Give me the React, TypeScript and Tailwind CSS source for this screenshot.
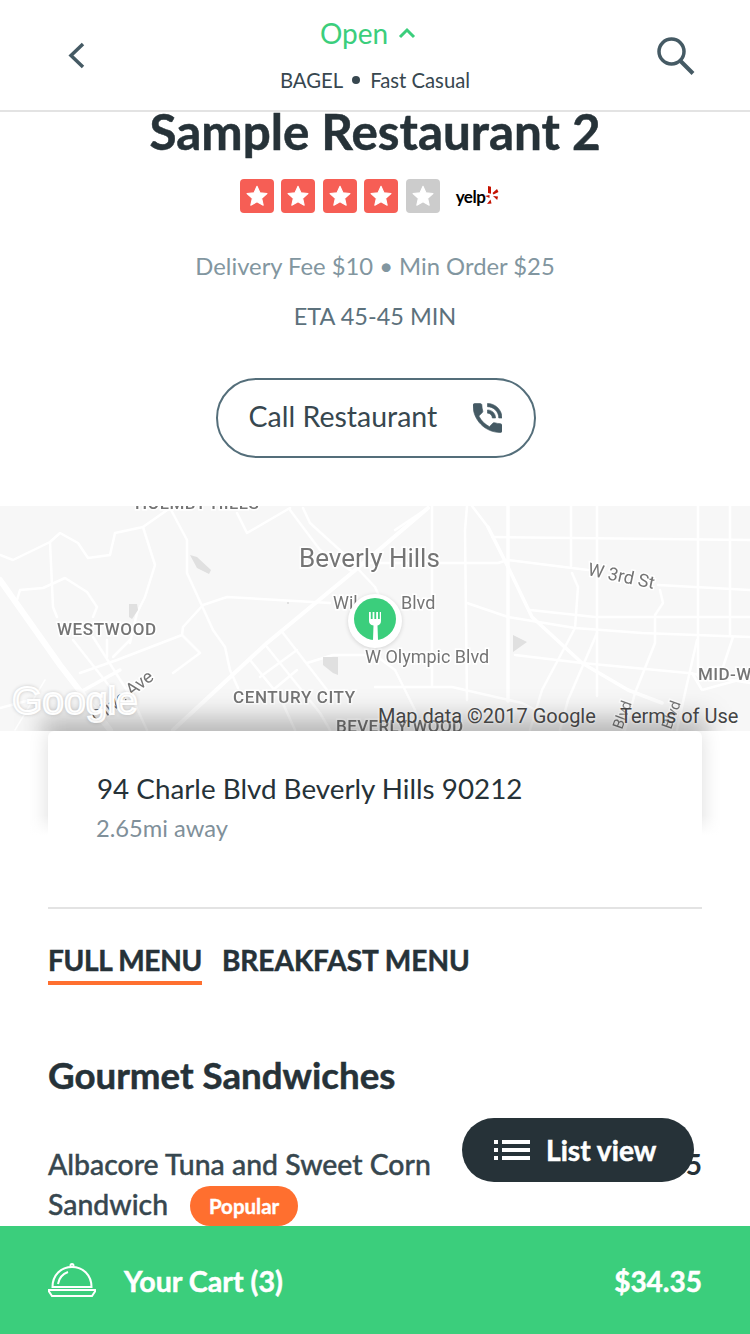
const lato = "font-['Lato','Inter',sans-serif]";

function Star({ fill }: { fill: string }) {
  return (
    <div className="w-[34px] h-[34px] rounded-[4px] flex items-center justify-center" style={{ backgroundColor: fill }}>
      <svg width="26" height="26" viewBox="0 0 24 24" fill="#fff" stroke="#fff" strokeWidth="1" strokeLinejoin="round"><path d="M12 3l2.700 6 6.500.7-4.900 4.400 1.400 6.400L12 17.300l-5.700 3.200 1.400-6.400-4.900-4.400 6.500-.7z" /></svg>
    </div>
  );
}

function MapArt() {
  const road = { fill: "none", stroke: "#fff", strokeLinejoin: "round" as const, strokeLinecap: "round" as const };
  const label = { fontFamily: "Roboto, sans-serif", fill: "#757575", stroke: "#fff", strokeWidth: 3, paintOrder: "stroke" as const };
  return (
    <svg className="absolute inset-0 w-full h-full blur-[0.5px]" viewBox="0 506 750 225">
      <rect x="0" y="500" width="750" height="235" fill="#f7f7f7" />
      <g {...road} strokeWidth="2.5">
        <path d="M0 555l13 5 37-18 10-9 18 10 10 15 22-3 5-22 28-6 27-19" />
        <path d="M143 527l12 38-10 32-8 16-7 30" />
        <path d="M50 542l3 65 4 10" />
        <path d="M17 600l3-10 23-2 22-10 22 14 10 15-4 10" />
        <path d="M170 508l17 32v33l26 57 12 17 5 23 8 18" />
        <path d="M330 603l-103-6-24 8-20 22-1 8-65 25-37 13" />
        <path d="M182 635l18 18-27 20" />
        <path d="M73 640l37 47" />
        <path d="M93 637l40 63 14 30" />
        <path d="M107 640v17" />
        <path d="M113 657l17-17" />
        <path d="M250 660l30 37 15 33" />
        <path d="M267 647l53 66 10 17" />
        <path d="M283 633l44 57" />
        <path d="M260 677l37-27" />
        <path d="M273 690l24-20" />
        <path d="M307 663l26-8h42l20 15 20 40 5 20" />
        <path d="M290 508l-43 25-10-20" />
        <path d="M290 510l30 40 33 22" />
        <path d="M303 508l7 15 33 30 32 34 18 40" />
        <path d="M428 508l-33 22" />
        <path d="M375 687h77l70 16 40 20" />
        <path d="M467 603l41 14 67 11 67 5 108 4" />
        <path d="M530 610l65 7h155" />
        <path d="M492 537l258 3" />
        <path d="M345 563h153l10-3 80 10" />
        <path d="M658 585l92 5" />
        <path d="M572 573l6 14-3 41-33 62-12 40" />
        <path d="M597 633l-29 67-8 30" />
        <path d="M660 590l3 13-8 12v28l-20 50-10 37" />
        <path d="M697 640l-12 53-8 37" />
        <path d="M733 637l-11 33" />
        <path d="M515 655l67 8 106 10 62 10" />
        <path d="M692 673l10 17 48-13" />
        <path d="M472 506l16 21" />
        <path d="M432 506v180" />
        <path d="M467 506l-2 24 2 170" />
        <path d="M571 506v60" />
        <path d="M597 506v190" />
        <path d="M698 506v170" />
        <path d="M730 506v130" />
      </g>
      <g {...road}>
        <path d="M508 506v195" strokeWidth="3.500" />
        <path d="M488 527l20 40 24 50 50 46 46 27 34 13" strokeWidth="3.500" />
        <path d="M0 580l60 85 50 65" strokeWidth="6" />
        <path d="M173 730l94-87 86-71 75-64" strokeWidth="4" />
        <path d="M75 695l45-25" strokeWidth="3.500" />
        <path d="M0 708l30-8" strokeWidth="2.500" />
        <path d="M15 730l30-50" strokeWidth="1.500" />
      </g>
      <g fill="#e0e0e0">
        <path d="M190 555l7 2 14 13-2 4-12-6z" />
        <path d="M129 604h8l1 6-6 9-3-2z" />
        <path d="M323 657h15v18l-5-2-10-8z" />
        <path d="M513 635l14 7-14 10z" />
        <path d="M287 602h2v2h-2z" />
      </g>
      <text x="135" y="509" fontSize="17" fontWeight="500" {...label} letterSpacing=".5">HOLMBY HILLS</text>
      <text x="299" y="567" fontSize="26" {...label}>Beverly Hills</text>
      <text x="57" y="635" fontSize="17" fontWeight="500" {...label} letterSpacing=".6">WESTWOOD</text>
      <text x="233" y="703" fontSize="17" fontWeight="500" {...label} letterSpacing=".6">CENTURY CITY</text>
      <text x="336" y="732" fontSize="17" fontWeight="500" {...label} letterSpacing=".4">BEVERLY WOOD</text>
      <text x="698" y="680" fontSize="17" fontWeight="500" {...label} letterSpacing=".4">MID-W</text>
      <text x="333" y="609" fontSize="18" {...label}>Wil</text>
      <text x="401" y="609" fontSize="18" {...label}>Blvd</text>
      <text x="365" y="663" fontSize="18" {...label}>W Olympic Blvd</text>
      <text x="587" y="575" fontSize="18" {...label} transform="rotate(12 587 575)">W 3rd St</text>
      <text x="97" y="724" fontSize="18" {...label} transform="rotate(-38 97 724)">Olive Ave</text>
      <text x="622" y="730" fontSize="15" {...label} transform="rotate(-70 622 730)">Blvd</text>
      <text x="671" y="730" fontSize="15" {...label} transform="rotate(-70 671 730)">Blvd</text>
    </svg>
  );
}

export default function App() {
  const heavy = "[-webkit-text-stroke-width:0.5px]";
  return (
    <div className={`relative w-[750px] h-[1334px] overflow-hidden bg-white flex flex-col ${lato}`}>
      <header className="relative z-20 h-[112px] shrink-0 bg-white border-b-2 border-[#e3e3e3] flex items-center justify-between pl-[64px] pr-[55px]">
        <svg width="24" height="30" viewBox="0 0 24 30" fill="none" stroke="#455a64" strokeWidth="3.5"><path d="M19 4L7 15.500l12 11.500" /></svg>
        <div className="ml-[5px] flex flex-col items-center">
          <div className="flex items-center gap-[10px] h-[34px] mr-[14px] mt-[-2px] text-[#3bce7c] text-[28px] leading-none">
            Open
            <svg width="18" height="12" viewBox="0 0 18 12" fill="none" stroke="#3bce7c" strokeWidth="3"><path d="M2 10l7-7 7 7" /></svg>
          </div>
          <div className="mt-[18px] flex items-center text-[20.300px] leading-[24px] text-[#37474f]">
            BAGEL<span className="ml-[9px] mr-[10px] w-[8px] h-[8px] rounded-full bg-[#37474f]" />Fast Casual
          </div>
        </div>
        <svg width="38" height="38" viewBox="0 0 38 38" fill="none" stroke="#455a64" strokeWidth="3.5" className="mt-[2px]"><circle cx="14.500" cy="14.500" r="12.500" /><path d="M23.500 24l12.500 12.500" strokeWidth="4" /></svg>
      </header>

      <main className="flex-1 min-h-0 overflow-hidden">
        <section className="h-[394px] flex flex-col items-center">
          <h1 className={`mt-[-10px] text-[49.400px] leading-[58px] font-bold text-[#263238] ${heavy}`}>Sample Restaurant 2</h1>
          <div className="mt-[19px] mr-[11px] flex items-center">
            <div className="flex gap-[7.500px]">
              <Star fill="#f65e55" /><Star fill="#f65e55" /><Star fill="#f65e55" /><Star fill="#f65e55" /><Star fill="#cccccc" />
            </div>
            <div className="ml-[16px] flex items-center">
              <span className="text-[17px] leading-none font-bold text-black tracking-[-0.5px]">yelp</span>
              <svg width="14" height="20" viewBox="0 0 14 20" fill="#c41200"><path d="M3 0l3 .8v7L3 7zM0 10l4.500-1v3zM2 18l3.500-4.500 1 4zM12 3l-4.500 4 1 1.500 5-2.500zM8 10l5 .5-.8 3.500z" /></svg>
            </div>
          </div>
          <p className="mt-[37px] text-[23.800px] leading-[32px] text-[#8296a0]">Delivery Fee $10 • Min Order $25</p>
          <p className="mt-[18px] text-[23.500px] leading-[32px] text-[#5c717c]">ETA 45-45 MIN</p>
          <button className="mt-[46px] ml-[1px] w-[320px] h-[80px] rounded-full border-2 border-[#546e7a] flex items-center justify-between pl-[31px] pr-[32px] pb-[4px] text-[28.500px] text-[#37474f]">
            Call Restaurant
            <svg width="29" height="30" viewBox="3 3 18 18" fill="#455a64" stroke="#455a64" strokeWidth="0.4" className="mt-[3px]">
              <path d="M20 15.500c-1.250 0-2.450-.2-3.570-.57-.35-.11-.74-.03-1.020.24l-2.200 2.200c-2.830-1.440-5.150-3.750-6.590-6.590l2.200-2.210c.28-.26.36-.65.25-1C8.700 6.450 8.500 5.250 8.500 4c0-.55-.45-1-1-1H4c-.55 0-1 .45-1 1 0 9.390 7.610 17 17 17 .55 0 1-.45 1-1v-3.500c0-.55-.45-1-1-1zM19 12h2c0-4.970-4.030-9-9-9v2c3.870 0 7 3.130 7 7zm-4 0h2c0-2.760-2.240-5-5-5v2c1.660 0 3 1.340 3 3z" />
            </svg>
          </button>
        </section>

        <section className="relative h-[225px] overflow-hidden">
          <MapArt />
          <div className="absolute left-[40px] right-[40px] bottom-[-16px] h-[32px] bg-black/20 blur-[12px]" />
          <div className="absolute left-[12px] top-[175px] text-[39px] leading-none font-['Liberation_Sans',sans-serif] text-[#ececec] [-webkit-text-stroke:2px_#ffffff] [text-shadow:0_0_4px_rgba(0,0,0,0.3)]">Google</div>
          <div className="absolute left-[378px] top-[198px] text-[20px] leading-[24px] font-['Roboto',sans-serif] text-[#444444] [text-shadow:0_0_3px_#ffffff]">Map data ©2017 Google</div>
          <div className="absolute left-[620px] top-[198px] text-[20px] leading-[24px] font-['Roboto',sans-serif] text-[#444444] [text-shadow:0_0_3px_#ffffff]">Terms of Use</div>
          <div className="absolute left-[348px] top-[88px] w-[54px] h-[54px] rounded-full bg-white shadow-[0_1px_4px_rgba(0,0,0,0.15)] flex items-center justify-center pb-[4px]">
            <div className="w-[42px] h-[42px] rounded-full bg-[#3bce7c] flex items-end justify-center">
              <svg width="14" height="28" viewBox="0 0 14 28" fill="#fff"><path d="M1 0h1.800v7h1.800V0h1.800v7h1.800V0h1.800v7h1.800V0H13v9c0 2.500-1.500 4-3.500 4.500L10 28H5l.5-14.500C2.500 13 1 11.500 1 9z" /></svg>
            </div>
          </div>
        </section>

        <div className="relative mx-[48px] h-[120px] rounded-t-[6px] bg-white shadow-[0_0_20px_rgba(0,0,0,0.14)] pl-[48px] pt-[40px]">
          <p className="relative z-10 ml-[1px] text-[27.800px] leading-[36px] text-[#263238]">94 Charle Blvd Beverly Hills 90212</p>
          <p className="relative z-10 mt-[6px] text-[23.700px] leading-[30px] text-[#7f909a]">2.65mi away</p>
        </div>

        <section className="relative z-0 mt-[-16px] bg-white px-[48px] pt-[72px]">
          <div className="absolute left-0 right-0 top-[-20px] h-[20px] bg-gradient-to-b from-white/0 to-white" />
          <div className="h-[2px] bg-[#e3e3e3]" />
          <div className={`mt-[33px] flex gap-[20px] text-[28px] leading-[36px] font-bold text-[#263238] ${heavy}`}>
            <span className="border-b-[4px] border-[#ff6f2f] h-[43px] tracking-[-0.3px]">FULL MENU</span>
            <span>BREAKFAST MENU</span>
          </div>
          <h2 className={`mt-[68px] text-[36.700px] leading-[44px] font-bold text-[#263238] ${heavy}`}>Gourmet Sandwiches</h2>
          <div className="mt-[47px] flex justify-between">
            <div className="w-[400px] text-[28.400px] leading-[40px] font-medium text-[#37474f] [-webkit-text-stroke-width:0.4px]">
              Albacore Tuna and Sweet Corn Sandwich
              <span className="relative top-[-2px] ml-[22px] inline-block align-middle w-[108px] h-[40px] rounded-full bg-[#ff6f2f] text-center text-[20.500px] leading-[40px] font-bold text-white">Popular</span>
            </div>
            <span className="text-[28px] leading-[40px] font-bold text-[#263238]">$8.75</span>
          </div>
        </section>
      </main>

      <div className={`absolute left-[462px] top-[1118px] z-30 w-[232px] h-[64px] rounded-full bg-[#263238] flex items-center pl-[32px] text-[28.200px] font-bold text-white ${heavy}`}>
        <svg width="36" height="20" viewBox="0 0 36 20" fill="#fff" className="mr-[16px]">
          <rect x="0" y="0" width="4" height="4" /><rect x="8" y="0" width="28" height="4" />
          <rect x="0" y="8" width="4" height="4" /><rect x="8" y="8" width="28" height="4" />
          <rect x="0" y="16" width="4" height="4" /><rect x="8" y="16" width="28" height="4" />
        </svg>
        List view
      </div>

      <footer className={`relative z-20 h-[108px] shrink-0 bg-[#3bce7c] flex items-center justify-between px-[48px] pt-[2px] text-white text-[28.600px] font-bold ${heavy}`}>
        <div className="flex items-center gap-[28px]">
          <svg width="48" height="34" viewBox="0 0 48 34" fill="none" stroke="#fff" strokeWidth="2" className="mb-[2px]">
            <circle cx="24" cy="2.500" r="1.500" />
            <path d="M4.500 24c0-12 8.500-20 19.500-20s19.500 8 19.500 20z" />
            <path d="M10 21c1-6 4.500-10 10-12" />
            <path d="M1 27h46v1.500l-3 4.500H4l-3-4.500z" />
          </svg>
          Your Cart (3)
        </div>
        <span className="text-[28px]">$34.35</span>
      </footer>
    </div>
  );
}
